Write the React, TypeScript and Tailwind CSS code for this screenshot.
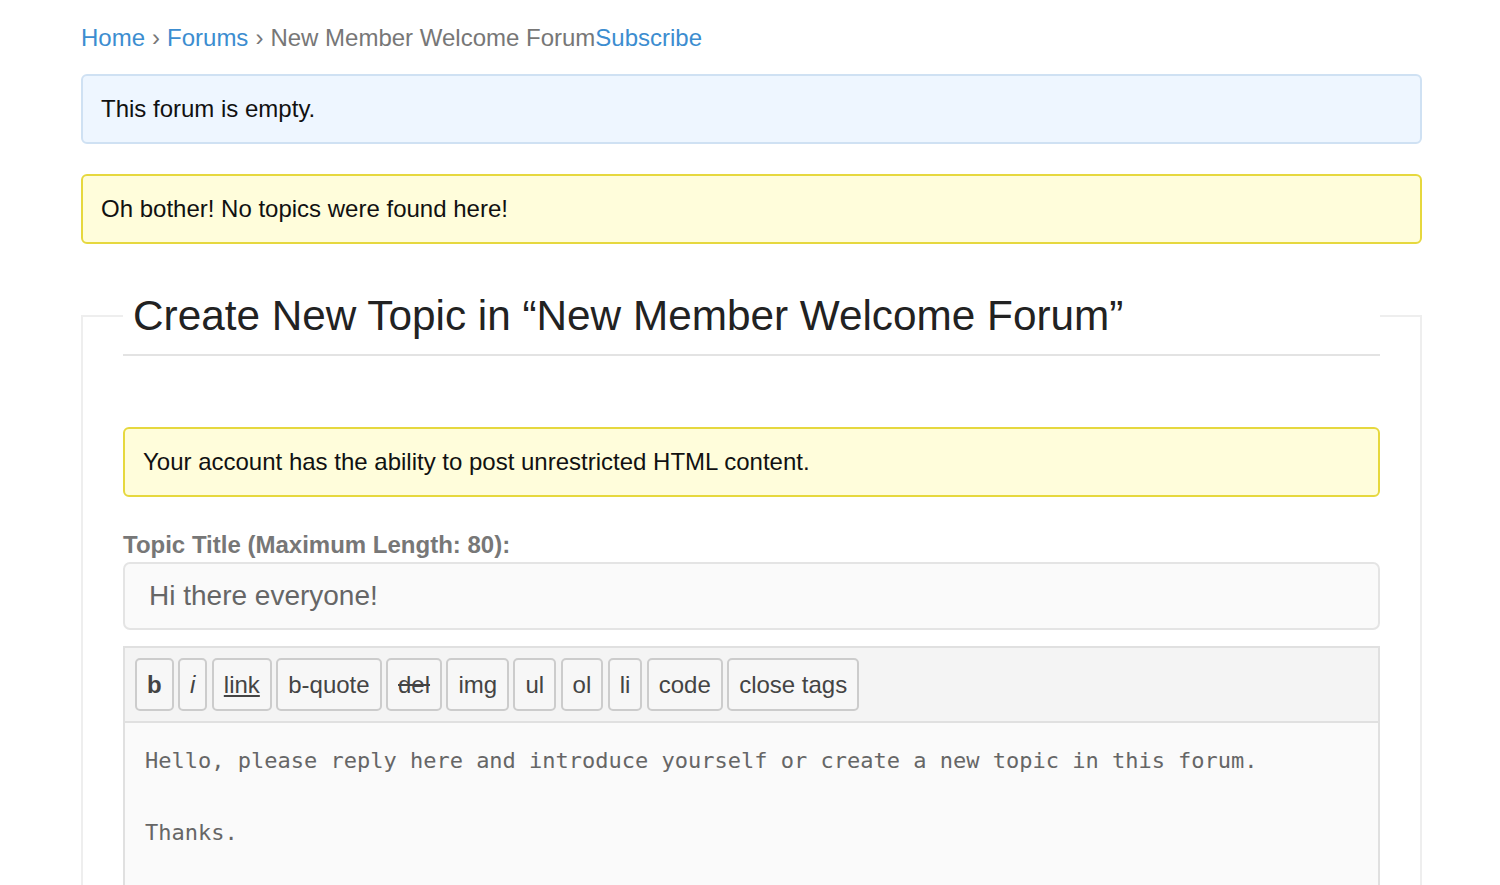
import React from "react";

const tools = [
  { label: "b", cls: "font-bold px-[10px]" },
  { label: "i", cls: "italic px-[10px]" },
  { label: "link", cls: "underline px-[10px]" },
  { label: "b-quote", cls: "px-[10px]" },
  { label: "del", cls: "line-through px-[10px]" },
  { label: "img", cls: "px-[10px]" },
  { label: "ul", cls: "px-[10px]" },
  { label: "ol", cls: "px-[10px]" },
  { label: "li", cls: "px-[10px]" },
  { label: "code", cls: "px-[10px]" },
  { label: "close tags", cls: "px-[10px]" },
];

export default function App() {
  return (
    <div
      className="min-h-screen bg-white pl-[81px] pr-[78px] pt-[22px] text-[24px] text-[#111]"
      style={{ fontFamily: '"Liberation Sans", Arial, sans-serif' }}
    >
      {/* Breadcrumb */}
      <div className="leading-[32px] text-[#777]">
        <a className="text-[#3c8dd0]">Home</a>
        <span className="mx-[7px]">›</span>
        <a className="text-[#3c8dd0]">Forums</a>
        <span className="mx-[7px]">›</span>
        <span>New Member Welcome Forum</span>
        <a className="text-[#3c8dd0]">Subscribe</a>
      </div>

      {/* Notices */}
      <div className="mt-[20px] flex h-[70px] items-center rounded-[6px] border-2 border-[#cfe1f3] bg-[#eef6ff] px-[18px]">
        This forum is empty.
      </div>
      <div className="mt-[30px] flex h-[70px] items-center rounded-[6px] border-2 border-[#e6d83e] bg-[#fffddb] px-[18px]">
        Oh bother! No topics were found here!
      </div>

      {/* New topic form */}
      <fieldset className="mt-[32px] border-2 border-[#eeeeee] px-[40px] pb-[40px]">
        <legend className="w-full border-b-2 border-[#e3e3e3] pb-[13px] pl-[10px] pt-[15px] text-[42.3px] leading-[50px] text-[#222]">
          Create New Topic in “New Member Welcome Forum”
        </legend>

        <div className="mt-[71px] flex h-[70px] items-center rounded-[6px] border-2 border-[#e6d83e] bg-[#fffddb] px-[18px]">
          Your account has the ability to post unrestricted HTML content.
        </div>

        <label className="mt-[34px] block font-bold leading-[28px] text-[#777]">
          Topic Title (Maximum Length: 80):
        </label>
        <div className="mt-[3px] flex h-[68px] items-center rounded-[7px] border-2 border-[#e4e4e4] bg-[#fafafa] px-[24px] text-[28px] text-[#666]">
          Hi there everyone!
        </div>

        {/* Editor */}
        <div className="mt-[16px] border-2 border-[#e0e0e0]">
          <div className="flex gap-[4.4px] bg-[#f4f4f4] px-[10px] py-[10px]">
            {tools.map((t) => (
              <span
                key={t.label}
                className={`flex h-[53px] items-center rounded-[5px] border-2 border-[#cccccc] bg-[#f7f7f7] text-[24px] text-[#444] ${t.cls}`}
              >
                {t.label}
              </span>
            ))}
          </div>
          <div
            className="h-[300px] border-t-2 border-[#e0e0e0] bg-[#fafafa] px-[20px] py-[20px] text-[22px] leading-[36px] text-[#666] whitespace-pre"
            style={{ fontFamily: '"DejaVu Sans Mono", "Liberation Mono", monospace' }}
          >
            {"Hello, please reply here and introduce yourself or create a new topic in this forum.\n\nThanks."}
          </div>
        </div>
      </fieldset>
    </div>
  );
}
